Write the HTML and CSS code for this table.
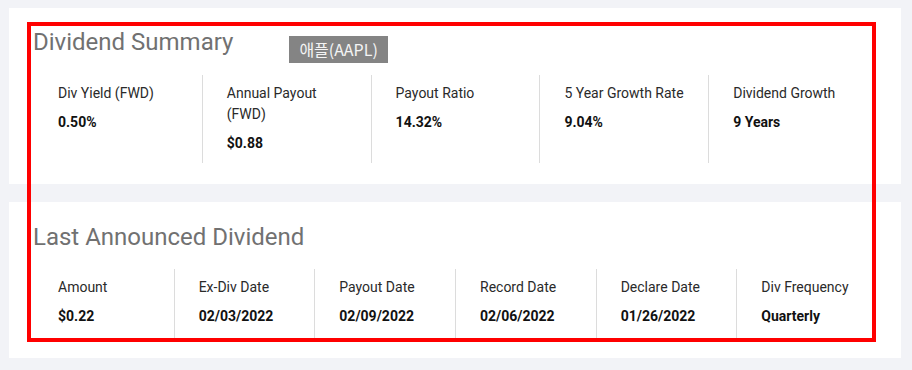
FILE: index.html
```html
<!DOCTYPE html>
<html lang="en">
<head>
<meta charset="utf-8">
<title>Dividend Summary</title>
<link rel="stylesheet" href="styles.css">
</head>
<body>
<div class="page">
  <section class="card card-summary">
    <div class="title-row">
      <h2 class="title">Dividend Summary</h2>
      <span class="badge">애플(AAPL)</span>
    </div>
    <div class="grid grid-5">
      <div class="cell">
        <div class="label">Div Yield (FWD)</div>
        <div class="value">0.50%</div>
      </div>
      <div class="cell">
        <div class="label">Annual Payout<br>(FWD)</div>
        <div class="value">$0.88</div>
      </div>
      <div class="cell">
        <div class="label">Payout Ratio</div>
        <div class="value">14.32%</div>
      </div>
      <div class="cell">
        <div class="label">5 Year Growth Rate</div>
        <div class="value">9.04%</div>
      </div>
      <div class="cell">
        <div class="label">Dividend Growth</div>
        <div class="value">9 Years</div>
      </div>
    </div>
  </section>
  <section class="card card-last">
    <div class="title-row">
      <h2 class="title">Last Announced Dividend</h2>
    </div>
    <div class="grid grid-6">
      <div class="cell">
        <div class="label">Amount</div>
        <div class="value">$0.22</div>
      </div>
      <div class="cell">
        <div class="label">Ex-Div Date</div>
        <div class="value">02/03/2022</div>
      </div>
      <div class="cell">
        <div class="label">Payout Date</div>
        <div class="value">02/09/2022</div>
      </div>
      <div class="cell">
        <div class="label">Record Date</div>
        <div class="value">02/06/2022</div>
      </div>
      <div class="cell">
        <div class="label">Declare Date</div>
        <div class="value">01/26/2022</div>
      </div>
      <div class="cell">
        <div class="label">Div Frequency</div>
        <div class="value">Quarterly</div>
      </div>
    </div>
  </section>
  <div class="highlight"></div>
</div>
</body>
</html>
```

FILE: styles.css
```css
* {
  box-sizing: border-box;
}

html, body {
  margin: 0;
  padding: 0;
  background: #f2f3f7;
}

body {
  font-family: Roboto, "Noto Sans CJK KR", "Liberation Sans", sans-serif;
  color: #222;
}

.page {
  position: relative;
  width: 912px;
  height: 370px;
  padding: 8px 11px 0 9px;
  display: flex;
  flex-direction: column;
  gap: 18px;
}

.card {
  background: #ffffff;
  padding: 20px 24px 21px 24px;
}

.card-last {
  padding-top: 21px;
  padding-bottom: 20px;
}

.title-row {
  display: flex;
  align-items: flex-start;
  height: 28px;
}

.title {
  margin: 0;
  font-size: 24px;
  line-height: 28px;
  font-weight: 400;
  color: #717171;
  letter-spacing: 0;
}

.badge {
  margin-left: 56px;
  margin-top: 8px;
  height: 27px;
  padding: 0 10px;
  background: #848484;
  color: #f4f4f4;
  font-family: "Noto Sans CJK KR", Roboto, sans-serif;
  font-size: 16px;
  line-height: 27px;
  white-space: nowrap;
}

.grid {
  display: grid;
}

.grid-5 {
  grid-template-columns: repeat(5, 1fr);
  margin-top: 19px;
}

.grid-6 {
  grid-template-columns: repeat(6, 1fr);
  margin-top: 18px;
}

.cell {
  padding: 8px 8px 9px 24px;
  border-left: 1px solid #dcdcdc;
}

.grid-6 .cell {
  padding-top: 8px;
  padding-bottom: 11px;
}

.cell:first-child {
  border-left: none;
  padding-left: 25px;
}

.label {
  font-size: 14px;
  line-height: 21px;
  color: #2a2a2a;
}

.value {
  margin-top: 8px;
  font-size: 14px;
  line-height: 21px;
  font-weight: 700;
  color: #111;
}

.grid-6 .value {
  margin-top: 8px;
}

.highlight {
  position: absolute;
  left: 27px;
  top: 22px;
  width: 849px;
  height: 320px;
  border: 4px solid #ff0000;
  pointer-events: none;
}
```
